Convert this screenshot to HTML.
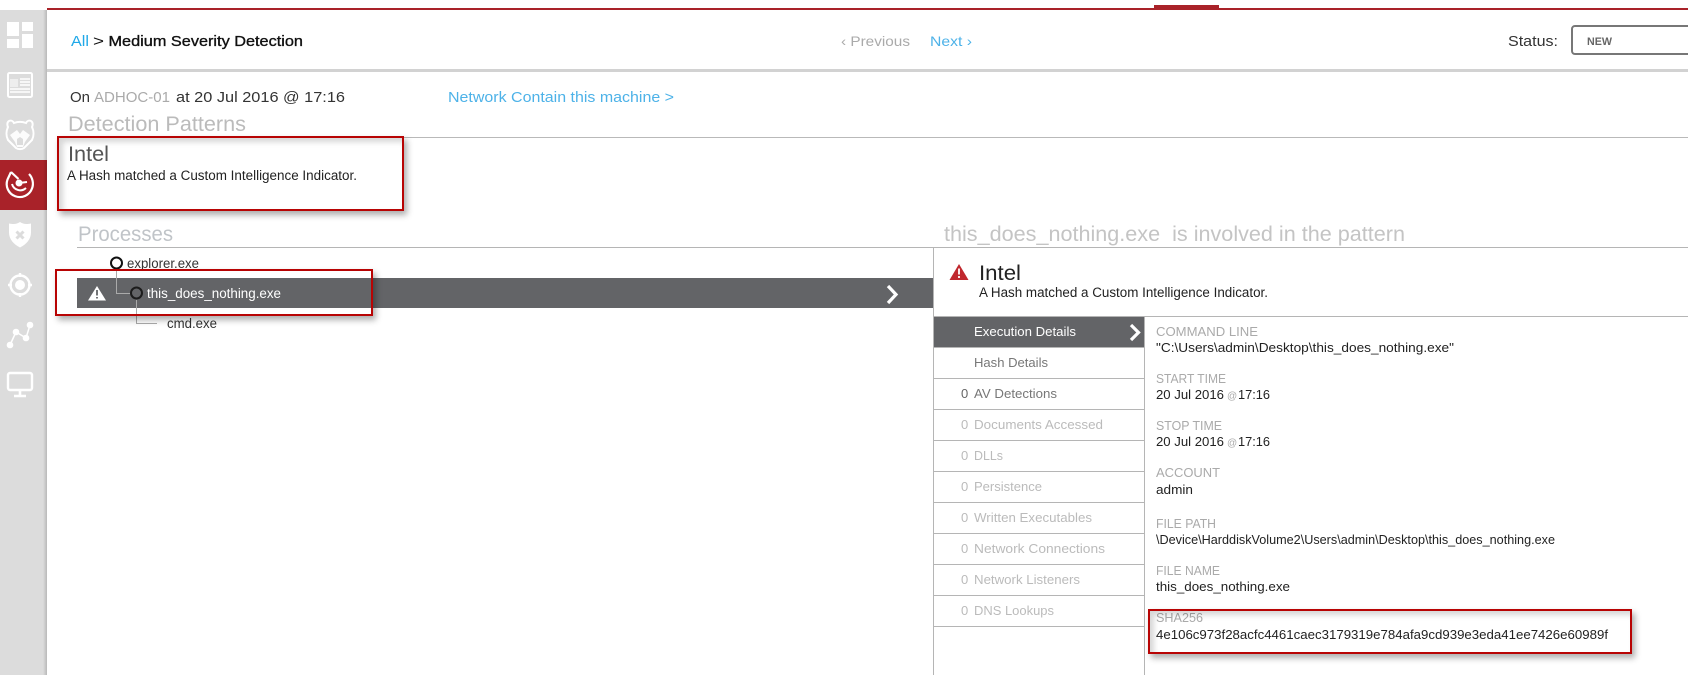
<!DOCTYPE html>
<html><head><meta charset="utf-8"><style>
html,body{margin:0;padding:0;background:#fff;width:1688px;height:675px;overflow:hidden}
svg{position:absolute;left:0;top:0}
text{font-family:"Liberation Sans",sans-serif;white-space:pre}
.rb{position:absolute;box-sizing:border-box;border:2px solid #b80404;box-shadow:3px 4px 6px rgba(0,0,0,.32),inset 4px 4px 6px rgba(0,0,0,.16)}
.s{position:absolute;left:43px;top:10px;width:4px;height:665px;background:linear-gradient(to right,rgba(0,0,0,0),rgba(0,0,0,.16))}
</style></head><body>
<svg width="1688" height="675" viewBox="0 0 1688 675">
<!-- sidebar -->
<rect x="0" y="10" width="47" height="665" fill="#dcdcdc"/>
<rect x="0" y="160" width="47" height="50" fill="#a92229"/>
<g fill="#fff">
<rect x="7" y="22" width="12" height="14"/><rect x="22" y="22" width="11" height="9"/><rect x="7" y="39" width="12" height="9"/><rect x="22" y="34" width="11" height="14"/>
</g>
<rect x="8" y="73" width="24" height="24" rx="1.5" fill="none" stroke="#fff" stroke-width="2"/>
<rect x="10" y="79" width="8" height="8" fill="#fff" opacity=".5"/>
<path d="M20 79h10M20 82h10M20 85h10M10 89h20M10 92h20" stroke="#fff" stroke-width="1.400"/>
<path d="M9 121c2-1 4 0 5 2 4-1.500 8-1.500 12 0 1-2 3-3 5-2 2 1 2 4 1 6 2 4 2 9 0 13l-8 8c-2 1.500-6 1.500-8 0l-8-8c-2-4-2-9 0-13-1-2-1-5 1-6z" fill="none" stroke="#fff" stroke-width="2"/>
<path d="M10 135l7-5 3 4 3-4 7 5-5 7-2 5h-6l-2-5z" fill="#fff" opacity=".9"/>
<path d="M17 139l3-2 3 2v6h-6z" fill="#dcdcdc"/>
<path d="M11 172l-3.500 7.500a12.800 12.800 0 0 0 24.500 9c2-5 .5-11-3-14.500" fill="none" stroke="#fff" stroke-width="2.200"/>
<path d="M11 172l7.500 7" stroke="#fff" stroke-width="2.200"/>
<path d="M12 184a8.500 8.500 0 0 0 14 4" fill="none" stroke="#fff" stroke-width="2"/>
<circle cx="19" cy="183" r="3.500" fill="#fff"/><path d="M19 183l8-1" stroke="#fff" stroke-width="2"/>
<path d="M20 222c3 2 6 2.500 11 1.500v9c0 7-5 12-11 15-6-3-11-8-11-15v-9c5 1 8 .5 11-1.500z" fill="#fff"/>
<path d="M16.500 231.500l7 7M23.500 231.500l-7 7" stroke="#dcdcdc" stroke-width="3"/>
<circle cx="20" cy="285" r="9.500" fill="none" stroke="#fff" stroke-width="2.400"/>
<circle cx="20" cy="285" r="5" fill="#fff"/>
<path d="M20 273v4M20 293v4M8 285h4M28 285h4" stroke="#fff" stroke-width="2.400"/>
<path d="M10 345l6-13 10 6 4-13" fill="none" stroke="#fff" stroke-width="1.500"/>
<circle cx="10" cy="345" r="3.300" fill="#fff"/><circle cx="16" cy="332" r="3.300" fill="#fff"/><circle cx="26" cy="338" r="3.300" fill="#fff"/><circle cx="30" cy="325" r="3.300" fill="#fff"/>
<rect x="8" y="373" width="24" height="17" rx="2" fill="none" stroke="#fff" stroke-width="2.400"/>
<path d="M20 390v5M14 396h12" stroke="#fff" stroke-width="2.600"/>
<!-- top -->
<rect x="47" y="8" width="1641" height="2" fill="#a92229"/>
<rect x="1154" y="5" width="65" height="4" fill="#a92229"/>
<rect x="47" y="69" width="1641" height="3" fill="#d2d2d2"/>
<text x="71" y="46" font-size="15" fill="#1fa8e8" textLength="18" lengthAdjust="spacingAndGlyphs">All</text>
<text x="93" y="46" font-size="15" fill="#111" textLength="11" lengthAdjust="spacingAndGlyphs">&gt;</text>
<text x="108.500" y="46" font-size="15" fill="#111" stroke="#111" stroke-width=".35" textLength="194.500" lengthAdjust="spacingAndGlyphs">Medium Severity Detection</text>
<text x="841" y="46" font-size="14" fill="#aaa" textLength="69" lengthAdjust="spacingAndGlyphs">‹ Previous</text>
<text x="930" y="46" font-size="14" fill="#4db2e8" textLength="42" lengthAdjust="spacingAndGlyphs">Next ›</text>
<text x="1508" y="46" font-size="15" fill="#333" textLength="50" lengthAdjust="spacingAndGlyphs">Status:</text>
<rect x="1572" y="26" width="130" height="28" rx="3" fill="#fff" stroke="#777" stroke-width="2"/>
<text x="1587" y="45" font-size="11" font-weight="bold" fill="#666" textLength="25" lengthAdjust="spacingAndGlyphs">NEW</text>
<!-- on line -->
<text x="70" y="102" font-size="15" fill="#333" textLength="20" lengthAdjust="spacingAndGlyphs">On</text>
<text x="94" y="102" font-size="15" fill="#aaa" textLength="76" lengthAdjust="spacingAndGlyphs">ADHOC-01</text>
<text x="176" y="102" font-size="15" fill="#333" textLength="169" lengthAdjust="spacingAndGlyphs">at 20 Jul 2016 @ 17:16</text>
<text x="448" y="102" font-size="15" fill="#4db2e8" textLength="226" lengthAdjust="spacingAndGlyphs">Network Contain this machine &gt;</text>
<text x="68" y="131" font-size="21" fill="#bbb" textLength="178" lengthAdjust="spacingAndGlyphs">Detection Patterns</text>
<rect x="60" y="137" width="1628" height="1" fill="#b9b9b9"/>
<text x="68" y="161" font-size="21" fill="#555" textLength="41" lengthAdjust="spacingAndGlyphs">Intel</text>
<text x="67" y="180" font-size="13.500" fill="#222" textLength="290" lengthAdjust="spacingAndGlyphs">A Hash matched a Custom Intelligence Indicator.</text>
<!-- section heads -->
<text x="78" y="241" font-size="21" fill="#c0c4c8" textLength="95" lengthAdjust="spacingAndGlyphs">Processes</text>
<text x="944" y="241" font-size="21" fill="#c4c4c4" textLength="461" lengthAdjust="spacingAndGlyphs">this_does_nothing.exe  is involved in the pattern</text>
<rect x="77" y="247" width="1611" height="1" fill="#b5b5b5"/>
<!-- tree -->
<rect x="77" y="278" width="856" height="30" fill="#636467"/>
<path d="M116.500 269V293.500H130" fill="none" stroke="#aaa"/>
<path d="M136.500 300V323.500H157" fill="none" stroke="#aaa"/>
<circle cx="116.500" cy="263" r="5.500" fill="#fff" stroke="#111" stroke-width="2"/>
<circle cx="136.500" cy="293" r="5.500" fill="#636467" stroke="#1c1c1c" stroke-width="2"/>
<text x="127" y="268" font-size="13.500" fill="#333" textLength="72" lengthAdjust="spacingAndGlyphs">explorer.exe</text>
<text x="147" y="298" font-size="13.500" fill="#fff" textLength="134" lengthAdjust="spacingAndGlyphs">this_does_nothing.exe</text>
<text x="167" y="328" font-size="13.500" fill="#333" textLength="50" lengthAdjust="spacingAndGlyphs">cmd.exe</text>
<path d="M97 286l9 14.500H88z" fill="#fff"/><path d="M97 290v5.500M97 297v1.500" stroke="#636467" stroke-width="1.800"/>
<path d="M888 286l8 8.500-8 8.500" fill="none" stroke="#fff" stroke-width="3.200"/>
<!-- right -->
<rect x="933" y="247" width="1" height="428" fill="#b5b5b5"/>
<path d="M959 264l9.500 16h-19z" fill="#c0272d"/><path d="M959 268.500v6M959 276v2" stroke="#fff" stroke-width="1.800"/>
<text x="979" y="280" font-size="21" fill="#222" textLength="42" lengthAdjust="spacingAndGlyphs">Intel</text>
<text x="979" y="297" font-size="13.500" fill="#222" textLength="289" lengthAdjust="spacingAndGlyphs">A Hash matched a Custom Intelligence Indicator.</text>
<rect x="934" y="316" width="754" height="1" fill="#b5b5b5"/>
<rect x="934" y="317" width="210" height="30" fill="#636467"/>
<rect x="1144" y="317" width="1" height="358" fill="#b5b5b5"/>
<g fill="#b5b5b5">
<rect x="934" y="347" width="210" height="1"/><rect x="934" y="378" width="210" height="1"/><rect x="934" y="409" width="210" height="1"/><rect x="934" y="440" width="210" height="1"/><rect x="934" y="471" width="210" height="1"/><rect x="934" y="502" width="210" height="1"/><rect x="934" y="533" width="210" height="1"/><rect x="934" y="564" width="210" height="1"/><rect x="934" y="595" width="210" height="1"/><rect x="934" y="626" width="210" height="1"/>
</g>
<path d="M1131 325l7.500 7.500-7.500 7.500" fill="none" stroke="#fff" stroke-width="3.200"/>
<g font-size="13">
<text x="974" y="336" fill="#fff" textLength="102" lengthAdjust="spacingAndGlyphs">Execution Details</text>
<text x="974" y="367" fill="#777" textLength="74" lengthAdjust="spacingAndGlyphs">Hash Details</text>
<text x="961" y="398" fill="#666">0</text><text x="974" y="398" fill="#777" textLength="83" lengthAdjust="spacingAndGlyphs">AV Detections</text>
<g fill="#bbb">
<text x="961" y="429">0</text><text x="974" y="429" textLength="129" lengthAdjust="spacingAndGlyphs">Documents Accessed</text>
<text x="961" y="460">0</text><text x="974" y="460" textLength="29" lengthAdjust="spacingAndGlyphs">DLLs</text>
<text x="961" y="491">0</text><text x="974" y="491" textLength="68" lengthAdjust="spacingAndGlyphs">Persistence</text>
<text x="961" y="522">0</text><text x="974" y="522" textLength="118" lengthAdjust="spacingAndGlyphs">Written Executables</text>
<text x="961" y="553">0</text><text x="974" y="553" textLength="131" lengthAdjust="spacingAndGlyphs">Network Connections</text>
<text x="961" y="584">0</text><text x="974" y="584" textLength="106" lengthAdjust="spacingAndGlyphs">Network Listeners</text>
<text x="961" y="615">0</text><text x="974" y="615" textLength="80" lengthAdjust="spacingAndGlyphs">DNS Lookups</text>
</g>
<g fill="#aaa">
<text x="1156" y="336" textLength="102" lengthAdjust="spacingAndGlyphs">COMMAND LINE</text>
<text x="1156" y="383" textLength="70" lengthAdjust="spacingAndGlyphs">START TIME</text>
<text x="1156" y="430" textLength="66" lengthAdjust="spacingAndGlyphs">STOP TIME</text>
<text x="1156" y="477" textLength="64" lengthAdjust="spacingAndGlyphs">ACCOUNT</text>
<text x="1156" y="528" textLength="60" lengthAdjust="spacingAndGlyphs">FILE PATH</text>
<text x="1156" y="575" textLength="64" lengthAdjust="spacingAndGlyphs">FILE NAME</text>
<text x="1156" y="622" textLength="47" lengthAdjust="spacingAndGlyphs">SHA256</text>
</g>
<g fill="#222">
<text x="1156" y="352" textLength="298" lengthAdjust="spacingAndGlyphs">"C:\Users\admin\Desktop\this_does_nothing.exe"</text>
<text x="1156" y="399" textLength="68" lengthAdjust="spacingAndGlyphs">20 Jul 2016</text><text x="1227" y="399" font-size="10" fill="#aaa">@</text><text x="1238" y="399" textLength="32" lengthAdjust="spacingAndGlyphs">17:16</text>
<text x="1156" y="446" textLength="68" lengthAdjust="spacingAndGlyphs">20 Jul 2016</text><text x="1227" y="446" font-size="10" fill="#aaa">@</text><text x="1238" y="446" textLength="32" lengthAdjust="spacingAndGlyphs">17:16</text>
<text x="1156" y="494" textLength="37" lengthAdjust="spacingAndGlyphs">admin</text>
<text x="1156" y="544" textLength="399" lengthAdjust="spacingAndGlyphs">\Device\HarddiskVolume2\Users\admin\Desktop\this_does_nothing.exe</text>
<text x="1156" y="591" textLength="134" lengthAdjust="spacingAndGlyphs">this_does_nothing.exe</text>
<text x="1156" y="639" textLength="452" lengthAdjust="spacingAndGlyphs">4e106c973f28acfc4461caec3179319e784afa9cd939e3eda41ee7426e60989f</text>
</g>
</g>
</svg>
<div class="s"></div>
<div class="rb" style="left:57px;top:136px;width:347px;height:75px"></div>
<div class="rb" style="left:55px;top:269px;width:318px;height:47px;box-shadow:3px 4px 6px rgba(0,0,0,.32)"></div>
<div class="rb" style="left:1148px;top:609px;width:484px;height:45px"></div>
</body></html>
